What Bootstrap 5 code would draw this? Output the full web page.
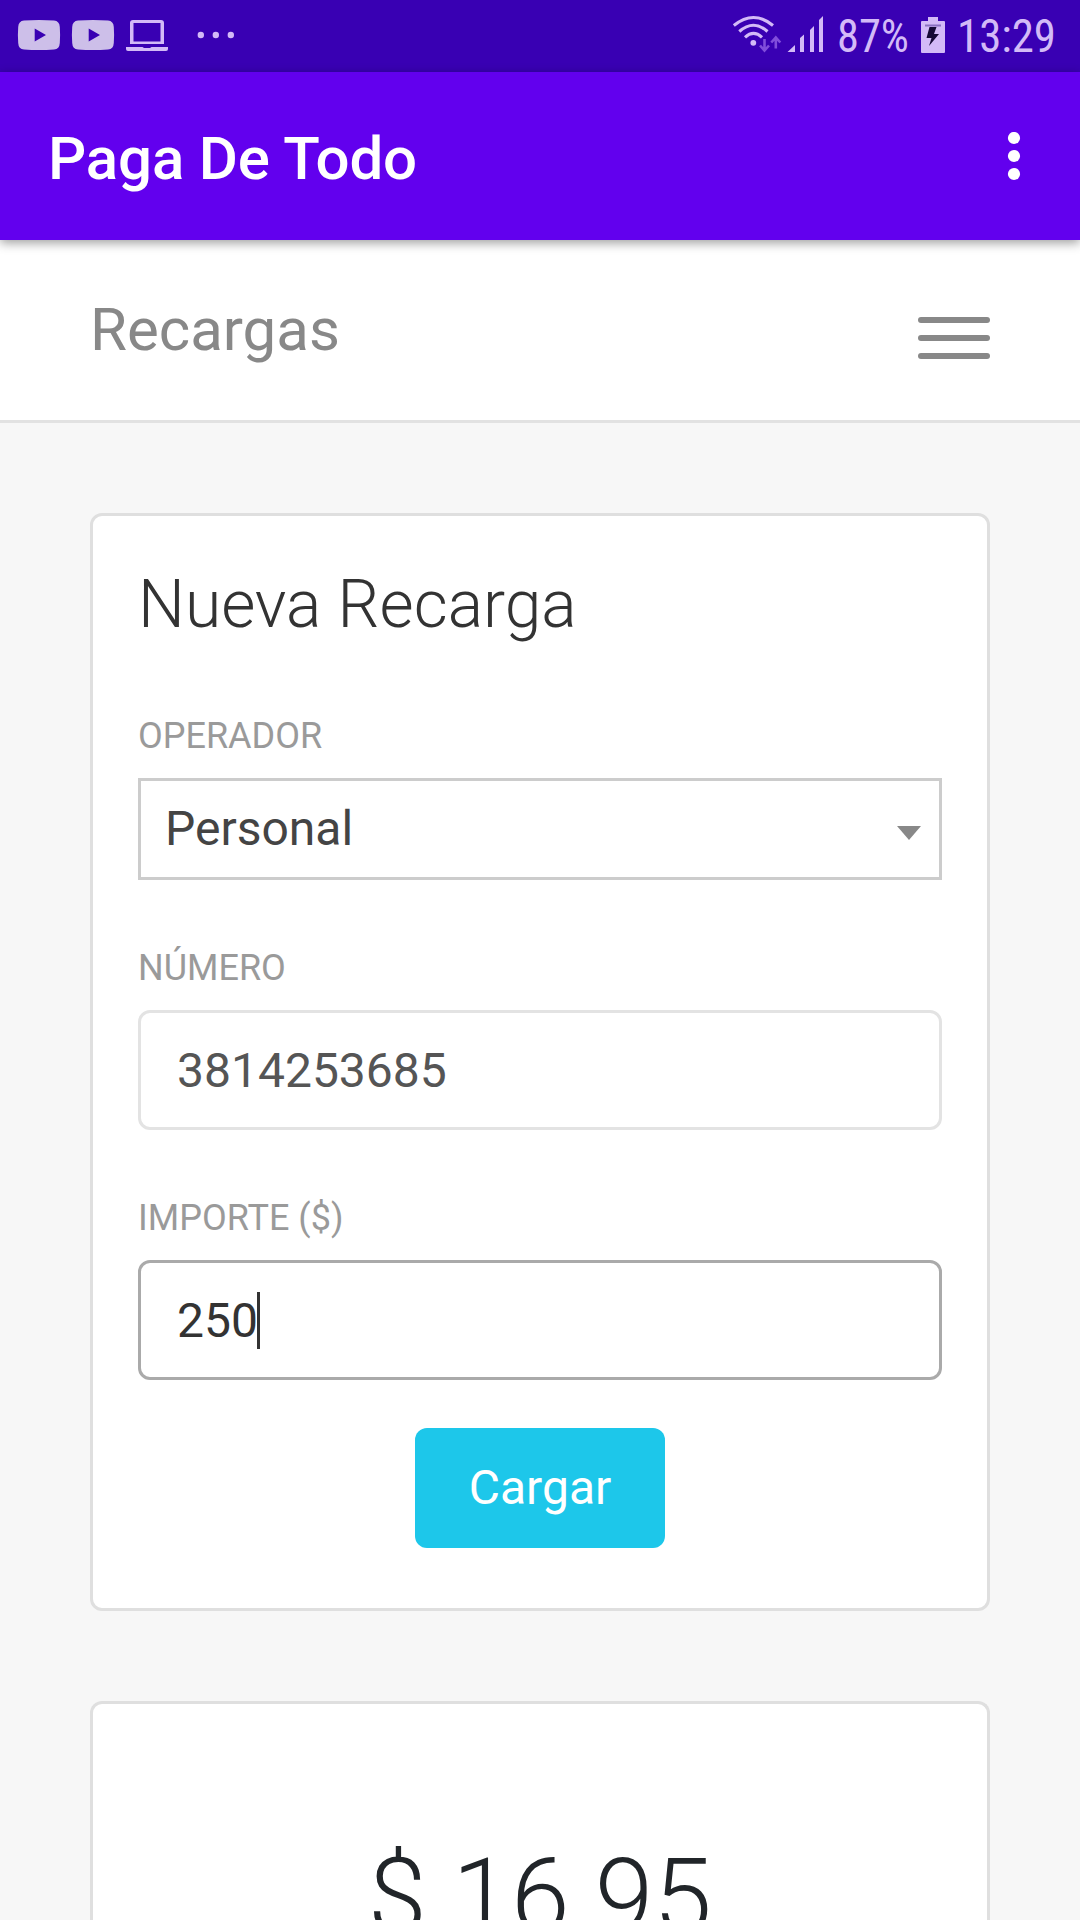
<!DOCTYPE html>
<html lang="es">
<head>
<meta charset="utf-8">
<meta name="viewport" content="width=device-width, initial-scale=1">
<title>Paga De Todo</title>
<link href="https://cdn.jsdelivr.net/npm/bootstrap@5.3.0/dist/css/bootstrap.min.css" rel="stylesheet">
<style>
body{font-family:Roboto,"Liberation Sans",sans-serif;background:#f7f7f7;height:1920px;overflow:hidden}
svg{display:block;flex:none}
.status-bar{height:72px;background:#3900b3;color:#cdbbf0}
.status-bar svg text{font-family:"Roboto Condensed",Roboto,sans-serif;font-stretch:condensed;font-size:46px;fill:#d3baf7}
.app-bar{height:168px;background:#6200ee;color:#fff;padding:4px 59px 0 48px;box-shadow:0 3px 10px rgba(0,0,0,.38);z-index:2}
.app-title{font-size:60px;font-weight:500;line-height:72px;letter-spacing:-.15px;padding-top:2px}
.page-nav{height:183px;border-bottom:3px solid #e2e2e2;padding:0 90px}
.page-title{font-size:60px;line-height:90px;color:#888}
.page-body{padding:90px 90px 0;gap:90px;min-height:0}
.panel{border:3px solid #dfdfdf;border-radius:12px}
.form-panel{height:1098px;padding:44px 45px 45px;flex:none}
.panel-title{font-size:66px;font-weight:300;line-height:90px;color:#333;margin:0 0 59px}
.field-label{font-size:36px;line-height:54px;color:#9a9a9a;text-transform:uppercase;margin:0 0 15px}
.field-box{height:120px;border:3px solid #e3e3e3;border-radius:12px;padding:2px 36px 0;font-size:48px;line-height:1;color:#555;margin-bottom:61px}
.field-box.is-active{border-color:#aaa;color:#333;margin-bottom:48px}
.select-box{height:102px;border:3px solid #ccc;padding:0 18px 0 24px;font-size:48px;line-height:1;color:#444;margin-bottom:61px}
.text-caret{width:3px;height:57px;background:#333;margin:0 0 2px -1px}
.load-btn{width:250px;height:120px;border:0;border-radius:12px;background:#1dc7ea;color:#fff;font-size:48px;line-height:1;padding:0}
.amount-panel{min-height:0;flex:1;border-bottom:0;border-radius:12px 12px 0 0;padding-top:130px}
.amount-text{font-size:105.6px;font-weight:300;line-height:126px;color:#212529}
</style>
</head>
<body class="d-flex flex-column">
<div class="status-bar d-flex flex-shrink-0 justify-content-between">
  <svg width="260" height="72" viewBox="0 0 260 72" fill="#cdbfe9">
    <path fill-rule="evenodd" d="M24 20.5Q39 19.300 54 20.500Q59.500 21 59.800 27Q60.400 35 59.800 43Q59.500 49 54 49.500Q39 50.500 24 49.500Q18.500 49 18.200 43Q17.600 35 18.200 27Q18.500 21 24 20.500ZM34.700 28.500V41.500L46 35Z"/>
    <path transform="translate(54)" fill-rule="evenodd" d="M24 20.500Q39 19.300 54 20.500Q59.500 21 59.800 27Q60.400 35 59.800 43Q59.500 49 54 49.500Q39 50.500 24 49.500Q18.500 49 18.200 43Q17.600 35 18.200 27Q18.500 21 24 20.500ZM34.700 28.500V41.500L46 35Z"/>
    <g fill="#d3baf7"><path fill-rule="evenodd" d="M133 20H161Q164 20 164 23V44H130V23Q130 20 133 20ZM133.500 23V41.500H160.500V23Z"/>
    <path d="M126 47H142.500L144 48H150L151.500 47H168V49Q168 51 166 51H128Q126 51 126 49Z"/>
    <circle cx="200.800" cy="35" r="3.200"/><circle cx="215.800" cy="35" r="3.200"/><circle cx="230.800" cy="35" r="3.200"/></g>
  </svg>
  <svg width="360" height="72" viewBox="0 0 360 72" fill="#d3baf7">
    <g fill="none" stroke="#d3baf7" stroke-width="3.100"><path d="M13.800 25.500Q33.500 9.500 53 25.500"/><path d="M19.300 31.500Q33.500 19 47.500 31.500"/><path d="M25 37.300Q33.500 29.500 42 37.300"/></g>
    <circle cx="33.300" cy="42.800" r="2.900"/>
    <g fill="none" stroke="#814ddb" stroke-width="2.600"><path d="M44.500 39V50M40 45.500L44.500 50.500L49 45.500"/><path d="M55.800 48.500V38M51.300 42.500L55.800 37.500L60.300 42.500"/></g>
    <path d="M67.500 52L75 45V52ZM80 38L84 34.500V52H80ZM90 30L94 26V52H90ZM99 20L103 16V52H99Z"/>
    <text x="117" y="52" textLength="72" lengthAdjust="spacingAndGlyphs">87%</text>
    <path d="M208 17H218V21H224Q225 21 225 22V52Q225 53 224 53H202Q201 53 201 52V22Q201 21 202 21H208Z"/>
    <path d="M205 25.500H221" stroke="#896fc0" stroke-width="2"/>
    <path d="M209.500 27H216.500L214 34H219L209 46L211.500 38H206.500Z" fill="#160936"/>
    <text x="237" y="52" textLength="99" lengthAdjust="spacingAndGlyphs">13:29</text>
  </svg>
</div>
<header class="app-bar d-flex flex-shrink-0 align-items-center justify-content-between position-relative">
  <span class="app-title">Paga De Todo</span>
  <svg width="14" height="52" viewBox="0 0 14 52" fill="#fff"><circle cx="7" cy="6" r="6.100"/><circle cx="7" cy="24" r="6.100"/><circle cx="7" cy="42" r="6.100"/></svg>
</header>
<nav class="page-nav bg-white d-flex flex-shrink-0 align-items-center justify-content-between">
  <span class="page-title">Recargas</span>
  <svg class="mt-3" width="72" height="42" viewBox="0 0 72 42" fill="#888"><rect width="72" height="6" y="0" rx="3"/><rect width="72" height="6" y="18" rx="3"/><rect width="72" height="6" y="36" rx="3"/></svg>
</nav>
<main class="page-body d-flex flex-column flex-grow-1">
  <section class="panel form-panel bg-white d-flex flex-column">
    <h4 class="panel-title">Nueva Recarga</h4>
    <label class="field-label">Operador</label>
    <div class="select-box d-flex align-items-center justify-content-between"><span>Personal</span>
      <svg class="mt-2" width="24" height="14" viewBox="0 0 24 14"><path d="M0 0H24L12 14Z" fill="#888"/></svg></div>
    <label class="field-label">Número</label>
    <div class="field-box d-flex align-items-center">3814253685</div>
    <label class="field-label">Importe ($)</label>
    <div class="field-box is-active d-flex align-items-center">250<span class="text-caret"></span></div>
    <button type="button" class="btn load-btn align-self-center">Cargar</button>
  </section>
  <section class="panel amount-panel bg-white text-center">
    <div class="amount-text">$ 16.95</div>
  </section>
</main>
<script src="https://cdn.jsdelivr.net/npm/bootstrap@5.3.0/dist/js/bootstrap.bundle.min.js"></script>
</body>
</html>
